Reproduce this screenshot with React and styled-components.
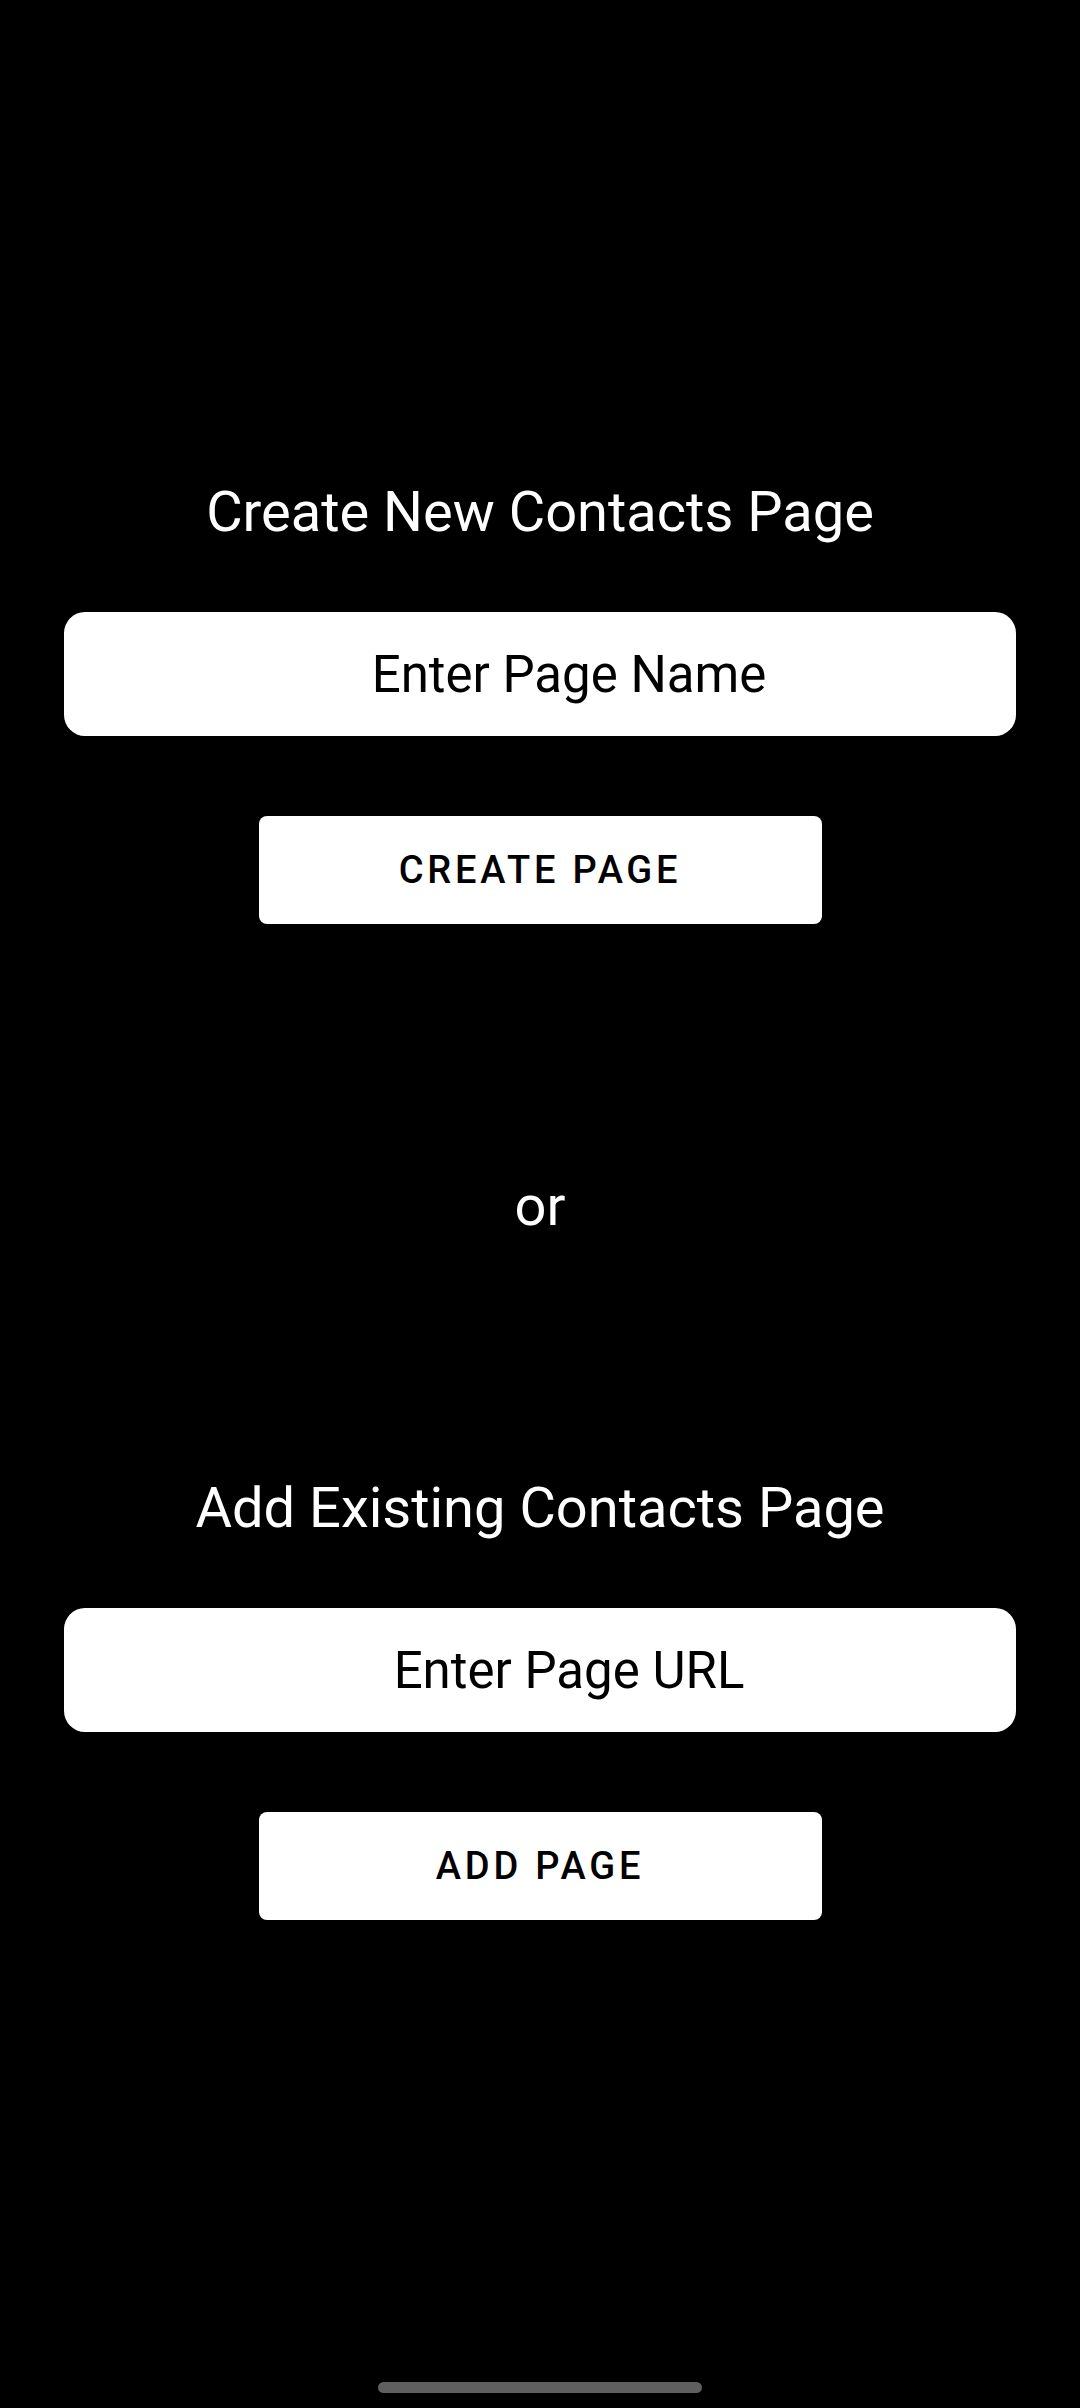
import React from "react";
import styled, { createGlobalStyle } from "styled-components";

const GlobalStyle = createGlobalStyle`
  html, body {
    margin: 0;
    padding: 0;
    background: #000000;
  }
  body {
    font-family: Roboto, "Noto Sans", "Liberation Sans", sans-serif;
  }
`;

export default function App() {
  return (
    <>
      <GlobalStyle />
      <Page>
        <Section>
          <Title>Create New Contacts Page</Title>
          <Field type="text" placeholder="Enter Page Name" />
          <ActionButton type="button">Create Page</ActionButton>
        </Section>

        <Divider>or</Divider>

        <Section>
          <Title>Add Existing Contacts Page</Title>
          <Field type="text" placeholder="Enter Page URL" />
          <ActionButton type="button">Add Page</ActionButton>
        </Section>

        <HomeBar />
      </Page>
    </>
  );
}

const Page = styled.main`
  width: 1080px;
  height: 2408px;
  box-sizing: border-box;
  padding-top: 484px;
  display: flex;
  flex-direction: column;
  align-items: center;
  background: #000000;
  overflow: hidden;
`;

const Section = styled.section`
  width: 100%;
  display: flex;
  flex-direction: column;
  align-items: center;
`;

const Title = styled.h2`
  margin: 0;
  color: #ffffff;
  font-size: 56px;
  font-weight: 400;
  line-height: 1;
  text-align: center;
`;

const Field = styled.input`
  width: 952px;
  height: 124px;
  margin-top: 72px;
  box-sizing: border-box;
  padding: 0 0 0 58px;
  border: none;
  border-radius: 21px;
  background: #ffffff;
  color: #000000;
  font-family: Roboto, "Noto Sans", sans-serif;
  font-size: 51px;
  text-align: center;
  outline: none;

  &::placeholder {
    color: #000000;
    opacity: 1;
  }
`;

const ActionButton = styled.button`
  width: 563px;
  height: 108px;
  margin-top: 80px;
  border: none;
  border-radius: 8px;
  background: #ffffff;
  color: #000000;
  font-family: Roboto, "Noto Sans", sans-serif;
  font-size: 38px;
  font-weight: 500;
  letter-spacing: 0.1em;
  text-transform: uppercase;
  display: flex;
  align-items: center;
  justify-content: center;
  padding: 0;
`;

const Divider = styled.p`
  margin: 254px 0 246px;
  color: #ffffff;
  font-size: 56px;
  line-height: 1;
`;

const HomeBar = styled.div`
  width: 324px;
  height: 11px;
  margin-top: auto;
  margin-bottom: 15px;
  border-radius: 6px;
  background: #5f5f5f;
`;
